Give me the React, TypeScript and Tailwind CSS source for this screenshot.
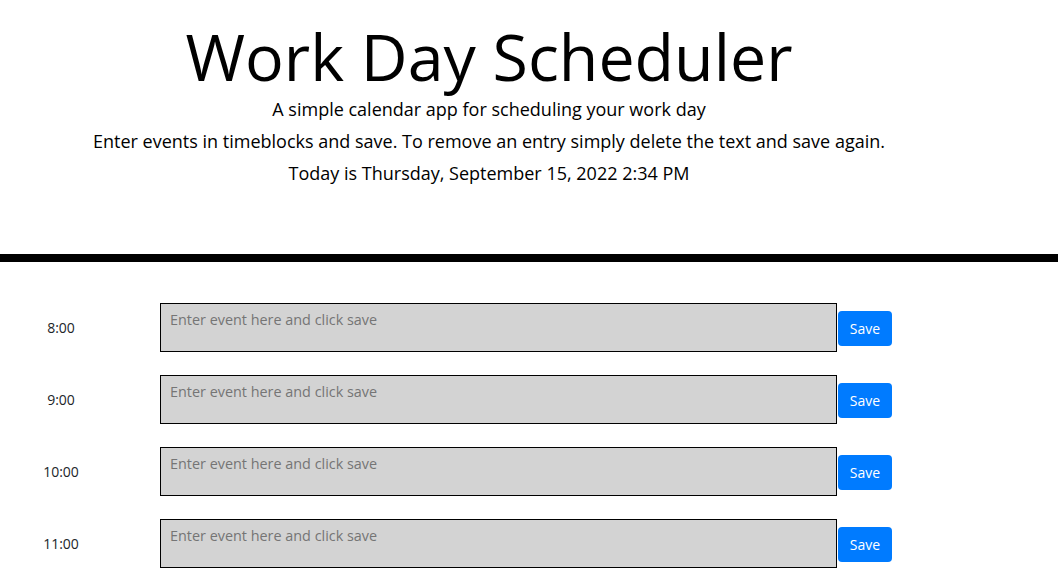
const hours = ['8:00', '9:00', '10:00', '11:00'];

function TimeBlock({ hour }: { hour: string }) {
  return (
    <div className="flex items-center h-[72px]">
      <div className="w-[122px] text-center text-[14px] text-[#212529]">{hour}</div>
      <textarea
        className="ml-[38px] w-[677px] h-[49px] bg-[#d3d3d3] border border-black px-[9px] py-[6px] text-[14.4px] leading-[20px] resize-none outline-none placeholder:text-[#757575]"
        placeholder="Enter event here and click save"
      />
      <button className="ml-px mt-[2px] w-[54px] h-[35px] bg-[#007bff] text-white text-[14px] rounded-[4px]">
        Save
      </button>
    </div>
  );
}

export default function App() {
  return (
    <div className="min-h-screen bg-white text-black font-['Open_Sans',sans-serif]">
      <header className="border-b-[8px] border-black">
        <div className="w-[978px] text-center pt-[19px] h-[254px]">
          <h1 className="text-[64.5px] leading-[74px] font-normal">Work Day Scheduler</h1>
          <p className="text-[18px] leading-[32px]">A simple calendar app for scheduling your work day</p>
          <p className="text-[18px] leading-[32px]">
            Enter events in timeblocks and save. To remove an entry simply delete the text and save again.
          </p>
          <p className="text-[18px] leading-[32px]">Today is Thursday, September 15, 2022 2:34 PM</p>
        </div>
      </header>

      {/* Time blocks */}
      <main className="pt-[29px]">
        {hours.map((h) => (
          <TimeBlock key={h} hour={h} />
        ))}
      </main>
    </div>
  );
}
